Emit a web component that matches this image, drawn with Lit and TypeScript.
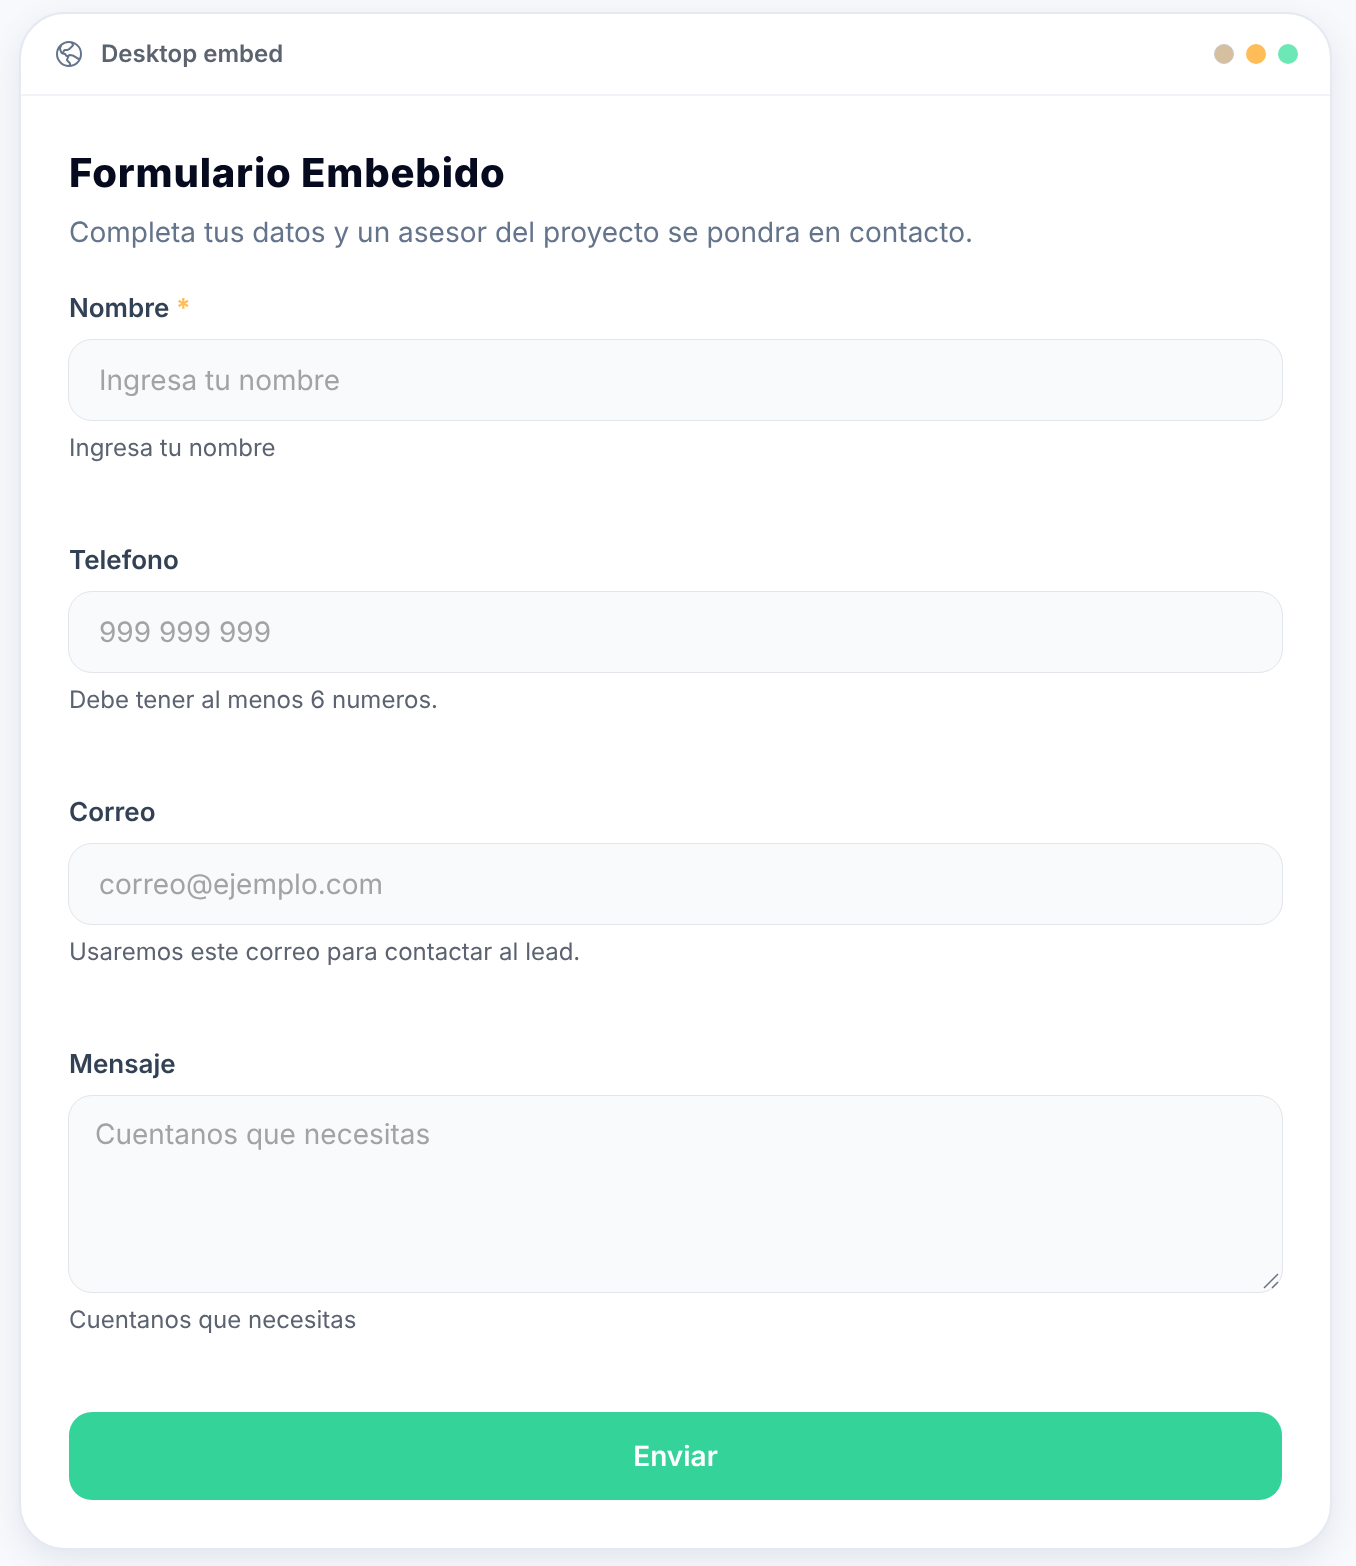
import { LitElement, html, css } from "lit";
import { customElement } from "lit/decorators.js";

const fields = [
  { label: "Nombre", req: true, ph: "Ingresa tu nombre", help: "Ingresa tu nombre" },
  { label: "Telefono", req: false, ph: "999 999 999", help: "Debe tener al menos 6 numeros." },
  { label: "Correo", req: false, ph: "correo@ejemplo.com", help: "Usaremos este correo para contactar al lead." },
];

@customElement("app-root")
export class AppRoot extends LitElement {
  static styles = css`
    :host { display: block; min-height: 1566px; background: #f7f9fc; font-family: Inter, "Liberation Sans", sans-serif; box-sizing: border-box; padding: 12px 24px 16px 19px; overflow: hidden; text-rendering: geometricPrecision; }
    * { box-sizing: border-box; }
    .card { background: #fff; border: 2px solid #e5e9f2; border-radius: 46px; height: 1538px; box-shadow: 0 10px 30px rgba(100, 116, 139, 0.14); overflow: hidden; will-change: transform; }
    .bar { height: 82px; border-bottom: 2px solid #f0f3f8; display: flex; align-items: center; padding: 0 32px 0 32px; }
    .bar svg { width: 32px; height: 32px; fill: #64748b; flex: none; }
    .bar .name { margin: 0 0 2px 16px; font-size: 24px; font-weight: 600; color: #5b6270; }
    .dots { margin-left: auto; display: flex; gap: 12px; }
    .dot { width: 20px; height: 20px; border-radius: 50%; }
    .d1 { border: 1px solid #cbc8c4; background: #d6bf9f; }
    .d2 { background: #ffbd59; }
    .d3 { background: #6ee7b7; }
    .body { padding: 49px 48px 0; }
    h1 { margin: 0; font-family: Inter, sans-serif; font-size: 40px; line-height: 56px; font-weight: 800; letter-spacing: 0.8px; color: #050a1f; }
    .sub { margin: 13px 0 0; font-size: 28px; line-height: 36px; color: #64748b; }
    .fields { display: flex; flex-direction: column; margin-top: 42px; }
    .field { height: 252px; }
    .field.tall { height: 364px; }
    label { display: block; padding-top: 1px; font-size: 26px; line-height: 32px; font-weight: 600; color: #334155; }
    .req { color: #ffbd59; font-weight: 700; }
    .box { position: relative; margin: 14px -1px 0; }
    input, textarea { display: block; width: 100%; border: 1px solid #e2e5ea; border-radius: 24px; background: #f9fafb; font-family: inherit; font-size: 28px; color: #111827; outline: none; text-rendering: inherit; }
    input { height: 82px; padding: 0 30px; }
    textarea { height: 198px; padding: 20px 26px; line-height: 36px; resize: none; }
    ::placeholder { color: #a3a3a3; opacity: 1; }
    .grip { position: absolute; right: 0; bottom: 0; width: 20px; height: 20px; stroke: #6b7280; stroke-width: 1.5; fill: none; pointer-events: none; }
    .help { margin: 12px 0 0; font-size: 24px; line-height: 30px; color: #5b6270; }
    button { display: block; width: 100%; height: 88px; border: 0; border-radius: 23px; background: #34d399; color: #fff; font-family: inherit; font-size: 28px; font-weight: 600; text-rendering: inherit; }
  `;

  render() {
    return html`
      <div class="card">
        <div class="bar">
          <svg viewBox="0 0 256 256"><path d="M128,24A104,104,0,1,0,232,128,104.11,104.11,0,0,0,128,24Zm88,104a87.62,87.62,0,0,1-6.4,32.94l-44.7-27.49a15.92,15.92,0,0,0-6.24-2.23l-22.82-3.08a16.11,16.11,0,0,0-16,7.86h-8.72l-3.8-7.86a15.91,15.91,0,0,0-11-8.67l-8-1.73L96.14,104h16.71a16.06,16.06,0,0,0,7.73-2l12.25-6.76a16.62,16.62,0,0,0,3-2.14l26.91-24.34A15.93,15.93,0,0,0,166,49.1l-.36-.65A88.11,88.11,0,0,1,216,128ZM143.31,41.34,152,56.9,125.09,81.24,112.85,88H96.14a16,16,0,0,0-13.88,8l-8.73,15.23L63.38,84.19,74.32,58.32a87.87,87.87,0,0,1,69-17ZM40,128a87.53,87.53,0,0,1,8.54-37.8l11.34,30.27a16,16,0,0,0,11.62,10l21.43,4.61L96.74,143a16.09,16.09,0,0,0,14.4,9h1.48l-7.23,16.23a16,16,0,0,0,2.86,17.37l.14.14L128,205.94l-1.94,10A88.11,88.11,0,0,1,40,128Zm102.58,86.78,1.13-5.81a16.09,16.09,0,0,0-4-13.9,1.85,1.85,0,0,1-.14-.14L120,174.74,133.7,144l22.82,3.08,45.72,28.12A88.18,88.18,0,0,1,142.58,214.78Z"/></svg>
          <span class="name">Desktop embed</span>
          <div class="dots"><span class="dot d1"></span><span class="dot d2"></span><span class="dot d3"></span></div>
        </div>
        <div class="body">
          <h1>Formulario Embebido</h1>
          <p class="sub">Completa tus datos y un asesor del proyecto se pondra en contacto.</p>
          <div class="fields">
            ${fields.map(f => html`
              <div class="field">
                <label>${f.label}${f.req ? html` <span class="req">*</span>` : ""}</label>
                <div class="box"><input placeholder=${f.ph} /></div>
                <p class="help">${f.help}</p>
              </div>`)}
            <div class="field tall">
              <label>Mensaje</label>
              <div class="box">
                <textarea placeholder="Cuentanos que necesitas"></textarea>
                <svg class="grip" viewBox="0 0 20 20"><path d="M1 15 15 1M9 15 15 9"/></svg>
              </div>
              <p class="help">Cuentanos que necesitas</p>
            </div>
          </div>
          <button>Enviar</button>
        </div>
      </div>
    `;
  }
}
